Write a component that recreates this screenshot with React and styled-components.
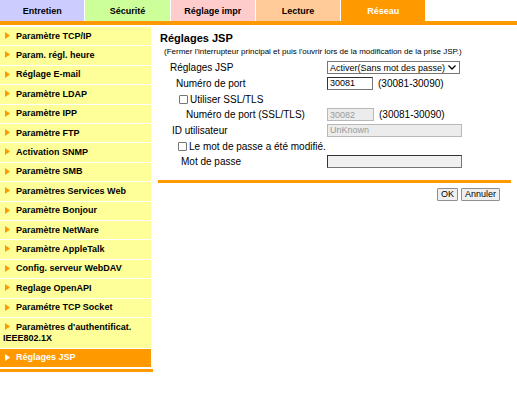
import React from 'react';
import styled, { createGlobalStyle } from 'styled-components';

const GlobalStyle = createGlobalStyle`
  body {
    margin: 0;
    background: #fff;
    font-family: "Liberation Sans", Arial, sans-serif;
    color: #000;
  }
`;

const tabs = [
  { label: 'Entretien', bg: '#ccccff' },
  { label: 'Sécurité', bg: '#ccff99' },
  { label: 'Réglage impr', bg: '#ffcccc' },
  { label: 'Lecture', bg: '#ffcc99' },
  { label: 'Réseau', bg: '#ff9900', active: true },
];

const menu = [
  'Paramètre TCP/IP',
  'Param. régl. heure',
  'Réglage E-mail',
  'Paramètre LDAP',
  'Paramètre IPP',
  'Paramètre FTP',
  'Activation SNMP',
  'Paramètre SMB',
  'Paramètres Services Web',
  'Paramètre Bonjour',
  'Paramètre NetWare',
  'Paramètre AppleTalk',
  'Config. serveur WebDAV',
  'Reglage OpenAPI',
  'Paramétre TCP Socket',
];

/* onglets */
const TabBar = styled.div`
  display: flex;
  gap: 1px;
  height: 21px;
`;

const Tab = styled.div`
  width: 84.3px;
  display: flex;
  align-items: center;
  justify-content: center;
  background: ${p => p.$bg};
  color: ${p => (p.$active ? '#fff' : '#000')};
  font-size: 9px;
  font-weight: bold;
`;

const OrangeBar = styled.div`
  height: ${p => p.$h || 4}px;
  background: #ff9900;
`;

const Body = styled.div`
  display: flex;
  margin-top: 2px;
  align-items: flex-start;
`;

/* menu de gauche */
const Sidebar = styled.div`
  width: 153px;
  display: flex;
  flex-direction: column;
`;

const MenuList = styled.div`
  width: 151px;
  display: flex;
  flex-direction: column;
  gap: 1px;
`;

const MenuItem = styled.div`
  background: ${p => (p.$active ? '#ff9900' : '#ffff99')};
  color: ${p => (p.$active ? '#fff' : '#000')};
  font-size: 9px;
  font-weight: bold;
  line-height: 11.4px;
  padding: 3.5px 2px 3.5px 3px;
`;

const Arrow = styled.svg`
  display: inline-block;
  width: 5px;
  height: 7px;
  margin: 0 6px 0 2px;
  vertical-align: -0.5px;
`;

const MenuFoot = styled(OrangeBar)`
  margin-top: 2px;
`;

/* contenu */
const Main = styled.div`
  flex: 1;
  margin: 0 6px 0 5px;
`;

const Title = styled.div`
  font-size: 11px;
  font-weight: bold;
  line-height: 14px;
  margin-top: 4px;
  padding-left: 2px;
`;

const Note = styled.div`
  font-size: 8px;
  line-height: 10px;
  margin-top: 2px;
  padding-left: 6px;
  white-space: nowrap;
`;

const Form = styled.div`
  margin-top: 3px;
`;

const Row = styled.div`
  display: grid;
  grid-template-columns: 169px auto 1fr;
  align-items: center;
  height: 15.67px;
  font-size: 10px;
`;

const Label = styled.div`
  padding-left: ${p => p.$indent}px;
  white-space: nowrap;
`;

const Hint = styled.span`
  margin-left: 5px;
  white-space: nowrap;
`;

const Field = styled.input`
  box-sizing: border-box;
  width: ${p => p.$w}px;
  height: 13px;
  margin: 0;
  padding: 0 2px;
  font-family: inherit;
  font-size: 9px;
  color: #000;
  background: ${p => (p.$grey ? '#f0f0f0' : '#fff')};
  border: 1px solid #767676;
  border-top-color: #333;
  border-left-color: #333;
  outline: none;

  &:disabled {
    color: #9a9a9a;
    background: #ececec;
    border-color: #b8b8b8;
  }
`;

const Select = styled.div`
  box-sizing: border-box;
  width: 133px;
  height: 13px;
  display: flex;
  align-items: center;
  justify-content: space-between;
  padding: 0 3px 0 2px;
  border: 1px solid #767676;
  background: #fff;
  font-size: 9px;
`;

const CheckRow = styled.div`
  display: flex;
  align-items: center;
  height: 15.67px;
  padding-left: ${p => p.$indent}px;
  font-size: 10px;
`;

const Box = styled.span`
  box-sizing: border-box;
  width: 9px;
  height: 9px;
  border: 1px solid #767676;
  border-radius: 1px;
  background: #fff;
  margin-right: 2px;
`;

const Divider = styled(OrangeBar)`
  margin-top: 10px;
`;

const Actions = styled.div`
  display: flex;
  justify-content: flex-end;
  gap: 3px;
  margin-top: 5px;
  padding-right: 11px;
`;

const Button = styled.button`
  height: 13px;
  min-width: ${p => p.$min || 0}px;
  padding: 0 3px;
  font-family: inherit;
  font-size: 9px;
  line-height: 11px;
  background: #efefef;
  border: 1px solid #8f8f8f;
  border-radius: 1px;
  color: #000;
`;

function ArrowIcon({ color }) {
  return (
    <Arrow viewBox="0 0 5 7">
      <polygon points="0,0 5,3.5 0,7" fill={color} />
    </Arrow>
  );
}

export default function App() {
  return (
    <>
      <GlobalStyle />
      <TabBar>
        {tabs.map(t => (
          <Tab key={t.label} $bg={t.bg} $active={t.active}>{t.label}</Tab>
        ))}
      </TabBar>
      <OrangeBar />
      <Body>
        <Sidebar>
          <MenuList>
            {menu.map(m => (
              <MenuItem key={m}><ArrowIcon color="#ff9900" />{m}</MenuItem>
            ))}
            <MenuItem><ArrowIcon color="#ff9900" />Paramètres d'authentificat.<br />IEEE802.1X</MenuItem>
            <MenuItem $active><ArrowIcon color="#fff" />Réglages JSP</MenuItem>
          </MenuList>
          <MenuFoot $h={3} />
        </Sidebar>

        <Main>
          <Title>Réglages JSP</Title>
          <Note>(Fermer l'interrupteur principal et puis l'ouvrir lors de la modification de la prise JSP.)</Note>
          <Form>
            <Row>
              <Label $indent={12}>Réglages JSP</Label>
              <Select>
                <span>Activer(Sans mot des passe)</span>
                <svg width="8" height="5" viewBox="0 0 8 5">
                  <polyline points="0.5,0.5 4,4 7.5,0.5" fill="none" stroke="#000" strokeWidth="1.3" />
                </svg>
              </Select>
            </Row>
            <Row>
              <Label $indent={18}>Numéro de port</Label>
              <Field $w={46} defaultValue="30081" />
              <Hint>(30081-30090)</Hint>
            </Row>
            <CheckRow $indent={21}>
              <Box />Utiliser SSL/TLS
            </CheckRow>
            <Row>
              <Label $indent={28}>Numéro de port (SSL/TLS)</Label>
              <Field $w={47} defaultValue="30082" disabled />
              <Hint>(30081-30090)</Hint>
            </Row>
            <Row>
              <Label $indent={14}>ID utilisateur</Label>
              <Field $w={135} defaultValue="UnKnown" disabled />
            </Row>
            <CheckRow $indent={20}>
              <Box />Le mot de passe a été modifié.
            </CheckRow>
            <Row>
              <Label $indent={23}>Mot de passe</Label>
              <Field $w={135} $grey type="password" />
            </Row>
          </Form>
          <Divider $h={3} />
          <Actions>
            <Button $min={20}>OK</Button>
            <Button $min={39}>Annuler</Button>
          </Actions>
        </Main>
      </Body>
    </>
  );
}
